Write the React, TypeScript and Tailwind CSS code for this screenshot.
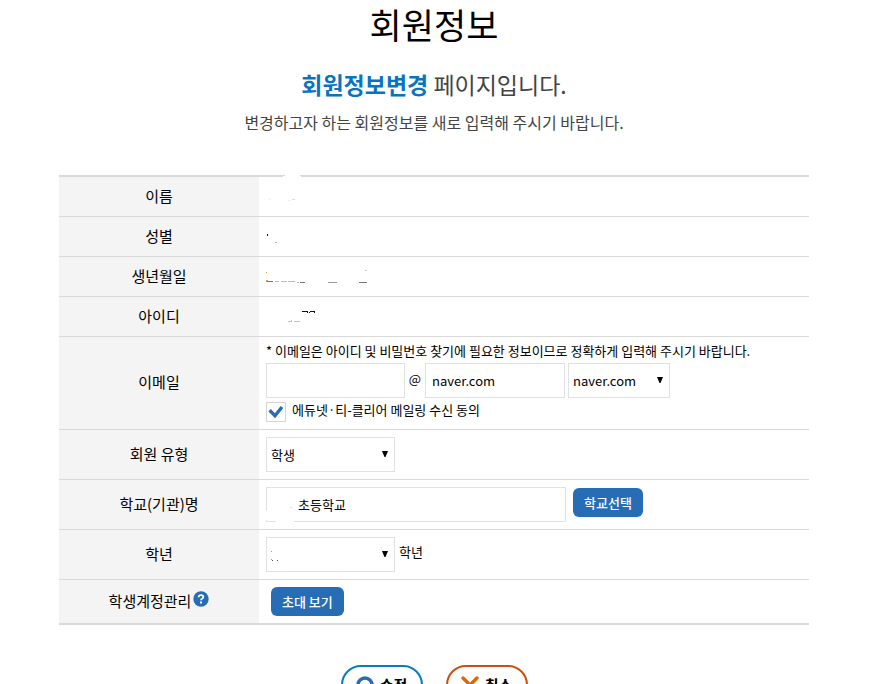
import React, { useState } from "react";

function SelectArrow() {
  return (
    <svg
      viewBox="0 0 8 7"
      className="pointer-events-none absolute right-1.5 top-3.5 h-[7px] w-2"
      aria-hidden="true"
    >
      <path d="M1 0h6L4.5 6h-1z" fill="#000" />
    </svg>
  );
}

function Row({
  label,
  children,
}: {
  label: React.ReactNode;
  children?: React.ReactNode;
}) {
  return (
    <tr className="group">
      <th
        scope="row"
        className="w-[200px] border-t border-[#d9d9d9] bg-[#f4f4f4] pb-0.5 text-[15px] font-normal leading-5 text-black group-first:border-t-0"
      >
        {label}
      </th>
      <td className="h-10 border-t border-[#d9d9d9] px-[7px] align-middle group-first:h-[39px] group-first:border-t-0">
        {children}
      </td>
    </tr>
  );
}

const fieldClass =
  "h-[35px] border border-[#e1e1e1] bg-white text-black outline-none";

const smallButtonClass =
  "h-[29px] rounded-md bg-[#276db6] px-[11px] text-[13px] font-medium text-white";

export default function MemberInfoPage() {
  const [emailId, setEmailId] = useState("");
  const [domain, setDomain] = useState("naver.com");
  const [agree, setAgree] = useState(true);
  const [school, setSchool] = useState("초등학교");

  return (
    <div className="bg-white pr-[23px] font-['Noto_Sans_CJK_KR',sans-serif] text-black">
      <main className="mx-auto w-full max-w-[750px]">
        <header className="text-center">
          <h1 className="text-[35px] leading-[48px]">회원정보</h1>
          <p className="mt-[18px] text-[23px] leading-9 text-[#444]">
            <strong className="font-bold text-[#0675c1]">회원정보변경</strong>{" "}
            페이지입니다.
          </p>
          <p className="mt-2 text-base leading-6 text-[#444]">
            변경하고자 하는 회원정보를 새로 입력해 주시기 바랍니다.
          </p>
        </header>

        <form onSubmit={(e) => e.preventDefault()}>
          <div className="relative mt-[41px] border-y-2 border-[#d9d9d9]">
            <svg
              viewBox="0 0 18 2"
              className="absolute -top-0.5 left-56 h-0.5 w-[18px]"
              aria-hidden="true"
            >
              <path d="M2 0h15v1h1v1H0V1h2z" fill="#fff" />
            </svg>
            <table className="w-full border-separate border-spacing-0">
              <tbody>
                <Row label="이름">
                  <svg viewBox="0 0 40 20" className="h-5 w-10" aria-hidden="true">
                    <path d="M3 12h1v1H3z" fill="#f3e6cf" />
                    <path d="M23 13h1v1h-1z" fill="#bcdcf5" />
                    <path d="M26 12h3v1h-3z" fill="#ddd" />
                  </svg>
                </Row>
                <Row label="성별">
                  <svg viewBox="0 0 40 20" className="h-5 w-10" aria-hidden="true">
                    <path d="M1 7h1v2H1z" fill="#301010" />
                    <path d="M9 15h2v1H9z" fill="#9ab5cc" />
                  </svg>
                </Row>
                <Row label="생년월일">
                  <svg viewBox="0 0 110 20" className="h-5 w-[110px]" aria-hidden="true">
                    <path d="M0 5h1v1H0zM0 13h2v2H0z" fill="#cda15c" />
                    <path d="M1 14h6v1H1zM34 15h5v1h-5z" fill="#777" />
                    <path d="M9 14h4v1H9zM15 14h6v1h-6zM22 14h7v1h-7zM31 15h2v1h-2z" fill="#bbb" />
                    <path d="M62 15h9v1h-9z" fill="#999" />
                    <path d="M93 15h8v1h-8z" fill="#777" />
                    <path d="M99 3h2v1h-2z" fill="#ccc" />
                  </svg>
                </Row>
                <Row label="아이디">
                  <svg viewBox="0 0 60 20" className="h-5 w-[60px]" aria-hidden="true">
                    <path d="M36 4h6v1h-6zM44 4h5v1h-5zM41 5h1v1h-1zM43 5h1v1h-1zM48 5h1v1h-1z" fill="#111" />
                    <path d="M22 14h4v1h-4zM28 14h6v1h-6zM25 13h1v1h-1z" fill="#c4c4c4" />
                  </svg>
                </Row>
                <Row label="이메일">
                  <p className="pt-1 text-[13px] leading-5">
                    * 이메일은 아이디 및 비밀번호 찾기에 필요한 정보이므로 정확하게
                    입력해 주시기 바랍니다.
                  </p>
                  <div className="mt-0.5 flex flex-wrap items-start">
                    <input
                      type="text"
                      aria-label="이메일 아이디"
                      value={emailId}
                      onChange={(e) => setEmailId(e.target.value)}
                      className={`${fieldClass} w-[139px] px-1.5 text-[13px]`}
                    />
                    <span className="w-5 text-center text-[13px] leading-8">@</span>
                    <input
                      type="text"
                      aria-label="이메일 도메인"
                      value={domain}
                      onChange={(e) => setDomain(e.target.value)}
                      className={`${fieldClass} w-[140px] px-1.5 text-[13px]`}
                    />
                    <div className="relative ml-[3px]">
                      <select
                        aria-label="도메인 선택"
                        defaultValue="naver.com"
                        onChange={(e) => setDomain(e.target.value)}
                        className={`${fieldClass} w-[102px] appearance-none px-1 text-[13px]`}
                      >
                        <option>naver.com</option>
                      </select>
                      <SelectArrow />
                    </div>
                  </div>
                  <label className="mt-1 flex items-start gap-1.5 pb-[7px] text-[13px] leading-4">
                    <span className="relative size-5">
                      <input
                        type="checkbox"
                        checked={agree}
                        onChange={(e) => setAgree(e.target.checked)}
                        className="peer block size-5 appearance-none border border-[#d5d5d5] bg-white"
                      />
                      <svg
                        viewBox="0 0 20 20"
                        className="pointer-events-none absolute inset-0 hidden size-5 peer-checked:block"
                        aria-hidden="true"
                      >
                        <path
                          d="M3.6 8.3L9 13.8L16 5"
                          fill="none"
                          stroke="#276db6"
                          strokeWidth="3.4"
                        />
                      </svg>
                    </span>
                    에듀넷·티-클리어 메일링 수신 동의
                  </label>
                </Row>
                <Row label="회원 유형">
                  <div className="relative my-[7px] w-[129px]">
                    <select
                      aria-label="회원 유형"
                      className={`${fieldClass} block w-full appearance-none px-1 text-[13px]`}
                    >
                      <option>학생</option>
                    </select>
                    <SelectArrow />
                  </div>
                </Row>
                <Row label="학교(기관)명">
                  <div className="my-[7px] flex items-start gap-[7px]">
                    <div className="relative">
                      <input
                        type="text"
                        aria-label="학교(기관)명"
                        value={school}
                        onChange={(e) => setSchool(e.target.value)}
                        className={`${fieldClass} block w-[300px] pl-[31px] text-[13px]`}
                      />
                      <svg
                        viewBox="0 0 30 35"
                        className="pointer-events-none absolute left-0 top-0 h-[35px] w-[30px]"
                        aria-hidden="true"
                      >
                        <path d="M0 24h1v9H0zM10 34h18v1H10z" fill="#fff" />
                        <path d="M24 20h2v1h-2z" fill="#dde0f3" />
                      </svg>
                    </div>
                    <button type="button" className={`mt-px ${smallButtonClass}`}>
                      학교선택
                    </button>
                  </div>
                </Row>
                <Row label="학년">
                  <div className="my-[7px] flex items-start gap-1">
                    <div className="relative w-[129px]">
                      <select
                        id="grade"
                        className={`${fieldClass} block w-full appearance-none px-1 text-[13px]`}
                      >
                        <option></option>
                      </select>
                      <svg
                        viewBox="0 0 10 12"
                        className="pointer-events-none absolute left-[5px] top-3 h-3 w-2.5"
                        aria-hidden="true"
                      >
                        <path d="M0 2h1v1H0zM0 10h1v1H0z" fill="#c9954f" />
                        <path d="M1 11h1v1H1zM6 11h1v1H6z" fill="#555" />
                      </svg>
                      <SelectArrow />
                    </div>
                    <label htmlFor="grade" className="text-[13px] leading-[30px]">
                      학년
                    </label>
                  </div>
                </Row>
                <Row
                  label={
                    <span className="inline-flex items-start gap-0.5">
                      학생계정관리
                      <svg viewBox="0 0 16 16" className="size-4" aria-hidden="true">
                        <circle cx="8" cy="8" r="7.7" fill="#276db6" />
                        <path
                          d="M5.6 6.3Q5.7 4.1 8 4.1Q10.3 4.1 10.3 6Q10.3 7 9 7.7Q8 8.2 8 9.3"
                          fill="none"
                          stroke="#fff"
                          strokeWidth="1.8"
                        />
                        <path d="M7 10.6h2v2H7z" fill="#fff" />
                      </svg>
                    </span>
                  }
                >
                  <button
                    type="button"
                    className={`my-[7px] ml-[5px] block ${smallButtonClass}`}
                  >
                    초대 보기
                  </button>
                </Row>
              </tbody>
            </table>
          </div>

          <div className="mt-10 flex justify-center gap-[23px]">
            <button
              type="submit"
              className="flex h-10 w-[82px] items-center justify-center gap-1.5 rounded-full border-2 border-[#0a7bc1] bg-white text-[15px] font-bold"
            >
              <svg viewBox="0 0 18 18" className="size-[18px]" aria-hidden="true">
                <circle cx="9" cy="9" r="7" fill="none" stroke="#276db6" strokeWidth="3.4" />
              </svg>
              수정
            </button>
            <button
              type="button"
              className="flex h-10 w-[82px] items-center justify-center gap-1.5 rounded-full border-2 border-[#c8500f] bg-white text-[15px] font-bold"
            >
              <svg viewBox="0 0 18 18" className="size-[18px]" aria-hidden="true">
                <path d="M2 2l14 14M16 2L2 16" stroke="#d96a0b" strokeWidth="3.4" strokeLinecap="round" />
              </svg>
              취소
            </button>
          </div>
        </form>
      </main>
    </div>
  );
}
